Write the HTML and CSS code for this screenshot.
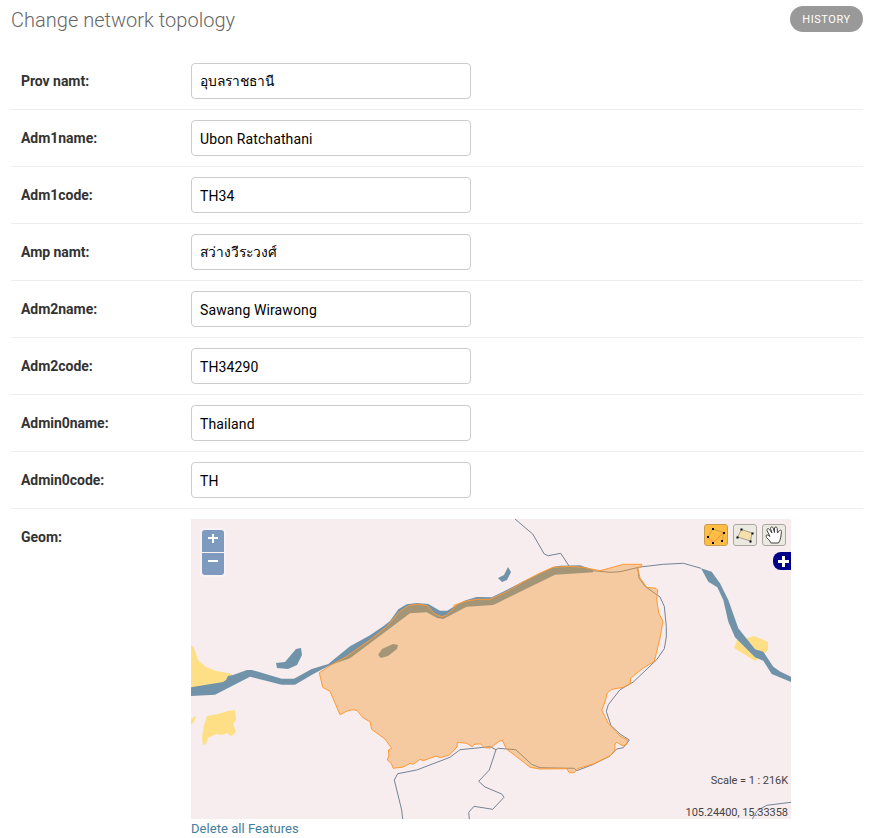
FILE: index.html
```html
<!DOCTYPE html>
<html lang="en">
<head>
<meta charset="utf-8">
<title>Change network topology</title>
<link rel="stylesheet" href="styles.css">
</head>
<body>
<main class="content">
  <header class="page-head">
    <h1>Change network topology</h1>
    <a class="history">HISTORY</a>
  </header>
  <form class="fields">
    <div class="row"><label for="f1">Prov namt:</label><input id="f1" class="thai" type="text" value="อุบลราชธานี"></div>
    <div class="row"><label for="f2">Adm1name:</label><input id="f2" type="text" value="Ubon Ratchathani"></div>
    <div class="row"><label for="f3">Adm1code:</label><input id="f3" type="text" value="TH34"></div>
    <div class="row"><label for="f4">Amp namt:</label><input id="f4" class="thai" type="text" value="สว่างวีระวงศ์"></div>
    <div class="row"><label for="f5">Adm2name:</label><input id="f5" type="text" value="Sawang Wirawong"></div>
    <div class="row"><label for="f6">Adm2code:</label><input id="f6" type="text" value="TH34290"></div>
    <div class="row"><label for="f7">Admin0name:</label><input id="f7" type="text" value="Thailand"></div>
    <div class="row"><label for="f8">Admin0code:</label><input id="f8" type="text" value="TH"></div>
    <div class="row geom">
      <label>Geom:</label>
      <div>
        <div class="map">
          <svg class="layers" viewBox="191 519 600 300" width="600" height="300">
            <g fill="#ffdf85">
              <path d="M191 645L194 648L198 660L206 667L216 671L228 673L232 674L230 684L191 692Z"/>
              <path d="M191 719L196 716L194 722L191 725Z"/>
              <path d="M207 716L218 714L228 711L235 710L236 720L233 724L236 732L231 736L227 733L222 735L216 734L208 738L206 744L203 745L202 737L204 725Z"/>
              <path d="M744 639L754 636L768 642L768 650L764 654L755 661L734 648L738 638Z"/>
            </g>
            <g fill="#7193a9">
              <path d="M191 687.3L223 682L226 680L228 676L233 675L247 670L252 670L281.7 678.7L294 678.7L311.7 669L328.3 664L350 646.3L370 635.3L383.3 626.3L390 621L398.3 609.3L406.7 604.3L416.7 603L428.3 604L440 610.7L447.3 610.7L454 606.5L465 600.5L476.7 597L491.7 597.3L506.7 590L523 581.5L540 573.5L553 567L560 565.7L580 565.3L593.3 569.7L593.3 572.3L555 574.7L500 601.8L493.3 605L466.7 606.7L443.3 619L437 618L426.7 612.3L410 613.3L390 628.3L350 658.3L330 665.3L313.3 674L295 684.7L281.7 684.7L250 676.7L215 694.7L191 696Z"/>
              <path d="M701 568.3L711.7 571.7L720 583.3L728.3 600L738.3 628.3L755 649.3L763.3 651.7L773.3 666.7L780 671.5L791 676.7V682L771.7 674L763.3 660.7L755 657.3L735 637.3L728.3 621.7L723.3 600L717.3 587.3L708.3 581.7Z"/>
              <path d="M276 663L285 662L296 649L301 648L302 655L297 665L288 669L277 668Z"/>
              <path d="M508 567L511 572L507 580L502 582L498 578L504 575Z"/>
              <path d="M378 655L382 649L393 644L398 645L397 649L388 656L381 658Z"/>
            </g>
            <g fill="none" stroke="#758394" stroke-width="1">
              <path d="M515 519L532.7 534L544.3 554L548.3 555.7L560.7 553.3L569.3 566.3"/>
              <path d="M593.3 570.7L610 572.3L620 571.7L640 567L663.3 564.3L683.3 563.3L701 568.3"/>
              <path d="M637.7 568L639 578L645 586.3L660 597L664.3 606.3L666.3 626.3V637L664.3 648.7L656.7 659.7L633.3 682L620 689.7L608.3 704.7L606.3 711.3L611 725.7L620 734L629.3 740L623.3 747.7L616.7 749L610 756L593 764.5L576.7 770.7L574.3 768.3L540 767.7L531.7 764.3L515.7 749.7L498.3 748.3L496 749.7L490 746.7L460 749.7L450 757.3L416.7 770L397.7 773.7L394.3 780L401.7 810L402.7 819"/>
              <path d="M496 749.7L489.3 770L478.7 781.3L485 787L501.7 794L504 797.3L492.7 809.3L474 806.3L468.7 812.3L469.3 819"/>
              <path d="M752.3 819L757.3 810.7L766.7 805.3L791 802.3"/>
            </g>
            <path class="feature" d="M319.3 672.7L330 665.7L346.7 656.3L370 640L386.7 626.7L398.3 612.7L408.3 605.7L418.3 604L427.3 605.7L435 614L441.7 616.7L446.7 615L454.3 607.7L454 605.3L465 601.3L476.7 599.3H490L506.7 591.7L523.3 581.7L540 573L553.3 567.3L570 566.3L583 567.3L600 570.7L610 568L623.3 564.3H641.7V566.7L637.7 568L640 578L646.7 587.3L656 588.3L657.7 590L656.7 599.7L658.7 613L663 621.3L660 638L654.3 661.3L643.3 668L630.7 678L630.3 683.7L623.3 687.3L611.7 689.3L607.3 693L605 702L601.7 710L608.3 723.3L620 736L627.3 740L627 744L623.3 746L616.7 742.3L615 744L614.7 750.7L610 756L593.3 764L577.3 768.7L574.3 772.7H569.3L566.7 768.7L540 769L530 767.3L520 759.3L506.7 749.3L502.3 740L498 742L493.3 745.7L490 748L484.3 747.7L481 744H475L472.3 746.7L466.7 743.3L457.3 742.3L457 747L449.3 755L440 757.7L436 756L423.3 760.7L420 759.3L413.3 764.3L410 763.3L403.3 767L393.3 768.3L391 763L387.3 760L389 755L388.3 750L391.7 748.3L385 739L371.7 729.3L370 721.7L363.3 718L357 710.5L353.3 709.7L347 711L340 714.7L335 703L330 691.3L322.7 687.3Z"/>
          </svg>
          <div class="zoom"><span class="in"><i></i></span><span><i></i></span></div>
          <div class="tools">
            <span class="tool on"><svg width="24" height="22" viewBox="0 0 24 22"><path d="M9 5L19.500 8.500M4 13L9 5M18.500 17L19.500 8.500" stroke="#c9a04c" fill="none"/><path d="M4 13L9 18.500L19.500 8.500" stroke="#ff8a50" fill="none"/><path d="M8 4h2v2h-2zM19 8h2v2h-2zM3 12h2v2h-2zM8 18h2v2h-2zM17 16h2v2h-2z"/></svg></span>
            <span class="tool"><svg width="24" height="22" viewBox="0 0 24 22"><path d="M8.500 5.500L19 9L17.500 17L4.500 13Z" fill="#f5dfaa" stroke="#aaa087"/><path d="M7.500 4.500h2v2h-2zM18.500 8.500h2v2h-2zM3.500 12.500h2v2h-2zM16.500 16.500h2v2h-2z"/></svg></span>
            <span class="tool"><svg width="24" height="22" viewBox="0 0 24 22"><path d="M9 19C8 16 4 14 4 12C4 10.500 6 10.500 8 12.500L5 6.500C4.500 4.500 6.500 4 7.500 5.500L10 9L8.500 4.500C8.500 2.500 10.500 2.500 11.200 4L12.500 8.500L12.500 4C13 2.500 15 2.500 15.200 4.500L15.500 9L17.500 6.500C18.500 5.500 19.700 6.500 19.500 7.500C19 11 19 15.500 16.500 19Z" fill="#fff" stroke="#444"/></svg></span>
          </div>
          <div class="expand"></div>
          <div class="scale">Scale = 1 : 216K</div>
          <div class="position">105.24400, 15.33358</div>
        </div>
        <a class="delete">Delete all Features</a>
      </div>
    </div>
  </form>
</main>
</body>
</html>
```
FILE: styles.css
```css
* { box-sizing: border-box; }
html, body { margin: 0; height: 838px; overflow: hidden; background: #fff; }
body { font-family: Roboto, "Noto Sans", sans-serif; font-size: 14px; color: #333; }
.content { padding: 6px 6px 0 11px; }
.page-head { display: flex; justify-content: space-between; align-items: flex-start; height: 47px; }
h1 { margin: 2px 0 0; font-size: 20px; line-height: 24px; font-weight: 300; letter-spacing: .02px; color: #666; }
.history { width: 73px; height: 26px; border-radius: 13px; background: #999; color: #fff; font-size: 11px; line-height: 27px; text-align: center; letter-spacing: .55px; }
.row { display: flex; align-items: flex-start; height: 57px; padding: 10px; border-bottom: 1px solid #eee; }
.row label { width: 170px; flex: none; padding-top: 8px; line-height: 20px; font-weight: 700; font-size: 14px; letter-spacing: -.04px; }
.row input { width: 280px; height: 36px; margin: 0; padding: 2px 8px 0; border: 1px solid #ccc; border-radius: 4px; background: #fff; color: #000; font: 14px Roboto, "Noto Sans", sans-serif; letter-spacing: .12px; outline: none; }
.row input.thai { padding: 0 8px 1px; font-size: 13.8px; letter-spacing: 0; }
.row.geom { height: auto; border: 0; }
.map { position: relative; width: 600px; height: 300px; background: #f7ecee; overflow: hidden; }
.layers { display: block; }
.feature { fill: #f2992b; fill-opacity: .4; stroke: #f93; stroke-width: 1; stroke-linejoin: round; }
.zoom { position: absolute; left: 9px; top: 9px; padding: 2px; border-radius: 4px; background: rgba(255,255,255,.4); }
.zoom span { position: relative; display: flex; align-items: center; justify-content: center; width: 22px; height: 22px; background: #7f9abf; border-radius: 0 0 3px 3px; }
.zoom span.in { border-radius: 3px 3px 0 0; margin-bottom: 1px; }
.zoom i { width: 10px; height: 2px; margin-bottom: 6px; background: #fff; }
.zoom .in i::after { content: ""; position: absolute; left: 10px; top: 4px; width: 2px; height: 9px; background: #fff; }
.tools { position: absolute; left: 513px; top: 5px; display: flex; gap: 5px; }
.tool { width: 24px; height: 22px; border: 1px solid #aaa79f; border-radius: 3px; background: #ebe9e2; display: flex; align-items: center; justify-content: center; }
.tool svg { flex: none; }
.tool.on { background: #ffbd43; border-color: #c69c50; }
.expand { position: absolute; left: 582px; top: 33px; width: 18px; height: 18px; border-radius: 8px 0 0 8px; background: linear-gradient(#fff,#fff) 5px 8px/11px 3px no-repeat, linear-gradient(#fff,#fff) 9px 4px/3px 11px no-repeat, #00008b; }
.scale, .position { position: absolute; right: 3px; font-size: 11px; line-height: 14px; letter-spacing: -.05px; color: #444; }
.scale { top: 255px; }
.position { top: 287px; }
.delete { display: block; margin-top: 1px; line-height: 18px; font-size: 13px; letter-spacing: .05px; color: #447e9b; }
```
